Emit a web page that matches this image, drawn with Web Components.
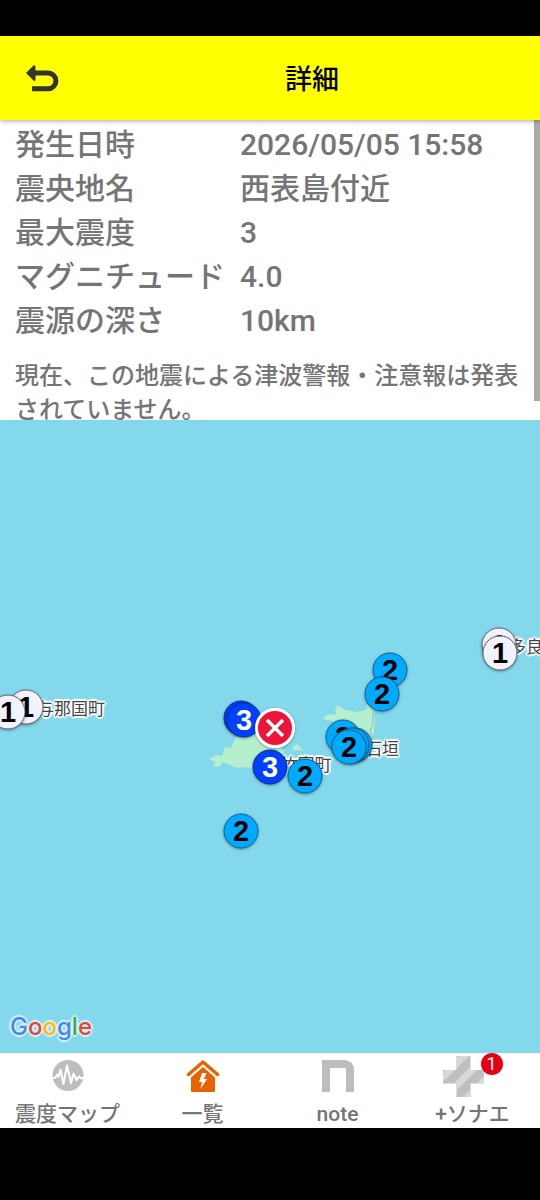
<!DOCTYPE html>
<html lang="ja">
<head>
<meta charset="utf-8">
<meta name="viewport" content="width=device-width, initial-scale=1">
<title>詳細</title>
<style>
  body {
    margin: 0;
    background: #000;
    color: #757575;
    font-family: Roboto, "Noto Sans CJK JP", sans-serif;
  }
</style>
</head>
<body>
<quake-app>
  <quake-header slot="header">詳細</quake-header>
  <quake-details slot="details"
    date="2026/05/05 15:58"
    place="西表島付近"
    intensity="3"
    magnitude="4.0"
    depth="10km">現在、この地震による津波警報・注意報は発表されていません。</quake-details>
  <quake-map slot="map">
    <map-label x="-199" y="-28">与那国町</map-label>
    <map-label x="256" y="-90">多良</map-label>
    <map-label x="112" y="12">石垣</map-label>
    <map-label x="36" y="28">竹富町</map-label>
    <map-pin x="-244" y="-30" level="1"></map-pin>
    <map-pin x="-262" y="-25" level="1"></map-pin>
    <map-pin x="229" y="-92" level="1"></map-pin>
    <map-pin x="230" y="-84" level="1"></map-pin>
    <map-pin x="120" y="-67" level="2"></map-pin>
    <map-pin x="112" y="-43" level="2"></map-pin>
    <map-pin x="73" y="0" level="2"></map-pin>
    <map-pin x="85" y="8" level="2"></map-pin>
    <map-pin x="82" y="8" level="2"></map-pin>
    <map-pin x="79" y="10" level="2"></map-pin>
    <map-pin x="35" y="39" level="2"></map-pin>
    <map-pin x="-29" y="94" level="2"></map-pin>
    <map-pin x="-29" y="-19" level="3"></map-pin>
    <map-pin x="-26" y="-17" level="3"></map-pin>
    <map-pin x="0" y="30" level="3"></map-pin>
    <map-pin x="5" y="-9" level="epicenter"></map-pin>
  </quake-map>
  <quake-nav slot="nav"></quake-nav>
</quake-app>

<script>
/* Estrutura geral da tela. */
class QuakeApp extends HTMLElement {
  constructor() {
    super();
    this.attachShadow({ mode: 'open' });
    this.shadowRoot.innerHTML = `<style>
  :host {
    box-sizing: border-box;
    display: flex;
    flex-direction: column;
    height: 100vh;
    padding: 36px 0 72px;
  }

  ::slotted([slot="details"]) {
    flex: 0 0 25vh;
  }

  ::slotted([slot="map"]) {
    flex: 1;
  }
</style>
<slot name="header"></slot>
<slot name="details"></slot>
<slot name="map"></slot>
<slot name="nav"></slot>`;
  }
}

class QuakeHeader extends HTMLElement {
  constructor() {
    super();
    this.attachShadow({ mode: 'open' });
    this.shadowRoot.innerHTML = `<style>
  :host {
    align-items: center;
    background: #ff0;
    box-shadow: 0 1px 5px rgba(0, 0, 0, 0.35);
    display: flex;
    flex: none;
    height: 84px;
    position: relative;
    z-index: 2;
  }

  button {
    background: none;
    border: 0;
    cursor: pointer;
    height: 84px;
    padding: 0;
    width: 84px;
  }

  svg {
    display: block;
    margin: 0 auto;
  }

  h1 {
    color: #000;
    flex: 1;
    font-size: 27px;
    font-weight: 500;
    line-height: 40px;
    margin: 0;
    padding-top: 4px;
    text-align: center;
  }
</style>
<button type="button" aria-label="戻る">
  <svg width="36" height="30" viewBox="0 0 36 30">
    <path d="M10 10H24a7.9 7.9 0 0 1 0 15.800H8" fill="none" stroke="#333" stroke-width="5"/>
    <path d="M2 10L9.500 2.500Q11.500 1.500 11.500 4V16.500Q11.500 19 9.500 17.500Z" fill="#333"/>
  </svg>
</button>
<h1><slot></slot></h1>`;
  }
}

/* Dados do terremoto. */
class QuakeDetails extends HTMLElement {
  constructor() {
    super();
    this.attachShadow({ mode: 'open' });
    const row = (label, name) =>
      `<tr><th scope="row">${label}</th><td>${this.getAttribute(name)}</td></tr>`;
    this.shadowRoot.innerHTML = `<style>
  :host {
    background: #fff;
    display: block;
    font-weight: 500;
    overflow: hidden;
    position: relative;
  }

  table {
    border-collapse: collapse;
    font-size: 30px;
    line-height: 44px;
    margin: 0 15px;
    padding-top: 3px;
    border-top: 3px solid transparent;
  }

  th, td {
    font-weight: 500;
    height: 44px;
    padding: 0;
    text-align: left;
    white-space: nowrap;
  }

  th {
    padding-right: 15px;
  }

  p {
    font-size: 24px;
    line-height: 34px;
    margin: 16px 15px;
  }

  .scroll__thumb {
    background: #aaa;
    height: 281px;
    position: absolute;
    right: 0;
    top: 0;
    width: 6px;
  }
</style>
<table>
  ${row('発生日時', 'date')}
  ${row('震央地名', 'place')}
  ${row('最大震度', 'intensity')}
  ${row('マグニチュード', 'magnitude')}
  ${row('震源の深さ', 'depth')}
</table>
<p><slot></slot></p>
<div class="scroll__thumb"></div>`;
  }
}

/* Mapa: os filhos sao posicionados em relacao ao centro. */
class QuakeMap extends HTMLElement {
  constructor() {
    super();
    this.attachShadow({ mode: 'open' });
    this.shadowRoot.innerHTML = `<style>
  :host {
    background: #84d8ec;
    display: block;
    overflow: hidden;
    position: relative;
  }

  .islands {
    left: calc(50% - 70px);
    position: absolute;
    top: calc(50% - 46px);
  }

  .logo {
    bottom: 10px;
    font-family: Inter, sans-serif;
    font-size: 24px;
    font-weight: 500;
    left: 10px;
    line-height: 32px;
    position: absolute;
    text-decoration: none;
    text-shadow: 0 0 3px #e4f6fb, 2px 0 1px #d3f0f8, -2px 0 1px #d3f0f8, 0 2px 1px #d3f0f8, 0 -2px 1px #d3f0f8;
  }

  .blue { color: #4285f4; }
  .red { color: #ea4335; }
  .yellow { color: #fbbc05; }
  .green { color: #34a853; }
</style>
<svg class="islands" width="190" height="90" viewBox="0 0 190 90">
  <g fill="#b4f0cd">
    <path d="M9 68L16 64L22 65L25 56L31 57L33 53L37 45L53 42L77 50L84 61L80 68L53 78L45 76L37 77L30 74L23 71L19 76L13 75L15 71Z"/>
    <path d="M92 56L97 53L104 60L98 59L95 60Z"/>
    <path d="M123 28L126 24L136 23L135 18L138 14L145 19L157 21L167 19L166 14L173 13L175 30L173 47L157 58L133 62L129 57L128 46L138 34L132 30Z"/>
  </g>
  <path d="M173 20V32L170 40L173 48" fill="none" stroke="#9fb4b4" stroke-width="1"/>
</svg>
<slot></slot>
<a class="logo" href="#map" aria-label="Google"><span class="blue">G</span><span class="red">o</span><span class="yellow">o</span><span class="blue">g</span><span class="green">l</span><span class="red">e</span></a>`;
  }
}

class MapLabel extends HTMLElement {
  constructor() {
    super();
    this.attachShadow({ mode: 'open' });
    this.shadowRoot.innerHTML = `<style>
  :host {
    color: #444;
    font-size: 17px;
    left: calc(50% + ${this.getAttribute('x')}px);
    line-height: 24px;
    position: absolute;
    text-shadow: 0 0 2px #fff, 1px 1px 1px #fff, -1px -1px 1px #fff, 1px -1px 1px #fff, -1px 1px 1px #fff, 2px 0 1px #fff, -2px 0 1px #fff, 0 2px 1px #fff, 0 -2px 1px #fff;
    top: calc(50% + ${this.getAttribute('y')}px);
    transform: translate(-50%, -50%);
    white-space: nowrap;
  }
</style>
<slot></slot>`;
  }
}

/* Intensidade observada em cada estacao. */
class MapPin extends HTMLElement {
  constructor() {
    super();
    this.attachShadow({ mode: 'open' });
    const level = this.getAttribute('level');
    const cross = `<svg width="40" height="40" viewBox="0 0 40 40">
  <circle cx="20" cy="20" r="18.500" fill="#f01438" stroke="#fff" stroke-width="3"/>
  <path d="M12 12L28 28M28 12L12 28" stroke="#fff" stroke-width="3.500"/>
</svg>`;
    this.shadowRoot.innerHTML = `<style>
  :host {
    border-radius: 50%;
    box-shadow: 0 1px 3px rgba(0, 0, 0, 0.35);
    box-sizing: border-box;
    display: block;
    font-family: "Liberation Sans", sans-serif;
    font-size: 29px;
    font-weight: 700;
    height: 35px;
    left: calc(50% + ${this.getAttribute('x')}px);
    line-height: 33px;
    position: absolute;
    text-align: center;
    top: calc(50% + ${this.getAttribute('y')}px);
    transform: translate(-50%, -50%);
    width: 35px;
  }

  :host([level="1"]) {
    background: #f2f2ff;
    border: 1px solid #666;
    color: #000;
  }

  :host([level="2"]) {
    background: #00aaff;
    border: 1px solid #17608c;
    color: #000;
  }

  :host([level="3"]) {
    background: #0041ff;
    border: 1px solid #102c94;
    color: #fff;
  }

  :host([level="epicenter"]) {
    height: 40px;
    width: 40px;
  }

  svg {
    display: block;
  }
</style>
${level === 'epicenter' ? cross : level}`;
  }
}

/* Menu inferior. */
class QuakeNav extends HTMLElement {
  constructor() {
    super();
    this.attachShadow({ mode: 'open' });
    this.shadowRoot.innerHTML = `<style>
  :host {
    background: #fff;
    display: block;
    flex: none;
  }

  nav {
    display: grid;
    grid-template-columns: repeat(4, 1fr);
    height: 75px;
  }

  a {
    align-items: center;
    color: inherit;
    display: flex;
    flex-direction: column;
    font-size: 21px;
    font-weight: 500;
    line-height: 30px;
    text-decoration: none;
  }

  .icon {
    align-items: center;
    display: flex;
    height: 46px;
    justify-content: center;
    position: relative;
    width: 60px;
  }

  .note {
    border: 8px solid #bdbdbd;
    border-bottom: 0;
    border-radius: 0 9px 0 0;
    box-sizing: border-box;
    height: 32px;
    width: 32px;
  }

  .sonae {
    justify-content: flex-start;
  }

  .badge {
    background: #e60012;
    border-radius: 50%;
    color: #fff;
    font-size: 18px;
    font-weight: 400;
    height: 22px;
    line-height: 22px;
    position: absolute;
    right: 0;
    text-align: center;
    top: 0;
    width: 22px;
  }
</style>
<nav>
  <a href="#map">
    <span class="icon">
      <svg width="32" height="32" viewBox="0 0 32 32">
        <circle cx="16" cy="15.500" r="15.500" fill="#bdbdbd"/>
        <path d="M0 18H3L5.500 14.500L6.500 17L8.500 9.500L11.500 24L15 5.500L19 23L21.500 13.500L24.500 20L27 16.500L29 18.500L32 17.500" fill="none" stroke="#fff" stroke-width="2" stroke-linejoin="round"/>
      </svg>
    </span>
    <span>震度マップ</span>
  </a>
  <a href="#list">
    <span class="icon">
      <svg width="34" height="34" viewBox="0 0 34 34">
        <path d="M17 7L29 17V31.500Q29 33 27.500 33H6.500Q5 33 5 31.500V17Z" fill="#ea6100"/>
        <path d="M1 18.500L17 4.500L33 18.500" fill="none" stroke="#fff" stroke-width="5"/>
        <path d="M2.500 15.500L17 3L31.500 15.500" fill="none" stroke="#ea6100" stroke-width="3.500" stroke-linecap="round" stroke-linejoin="round"/>
        <path d="M16 14H20.500L18 20H21L14.500 30L16 23H13Z" fill="#fff"/>
      </svg>
    </span>
    <span>一覧</span>
  </a>
  <a href="#note">
    <span class="icon"><span class="note"></span></span>
    <span>note</span>
  </a>
  <a href="#sonae">
    <span class="icon sonae">
      <svg width="41" height="41" viewBox="0 0 41 41">
        <defs>
          <clipPath id="cross"><path d="M13.500 0H27.500V14H41V27.500H27.500V41H13.500V27.500H0V14H13.500Z"/></clipPath>
        </defs>
        <g clip-path="url(#cross)">
          <rect width="41" height="41" fill="#bfbfbf"/>
          <path d="M-6 27L27 -6M-6 49L49 -6M10 56L56 10" stroke="#d6d9d8" stroke-width="7"/>
        </g>
      </svg>
      <span class="badge">1</span>
    </span>
    <span>+ソナエ</span>
  </a>
</nav>`;
  }
}

customElements.define('quake-app', QuakeApp);
customElements.define('quake-header', QuakeHeader);
customElements.define('quake-details', QuakeDetails);
customElements.define('quake-map', QuakeMap);
customElements.define('map-label', MapLabel);
customElements.define('map-pin', MapPin);
customElements.define('quake-nav', QuakeNav);
</script>
</body>
</html>
